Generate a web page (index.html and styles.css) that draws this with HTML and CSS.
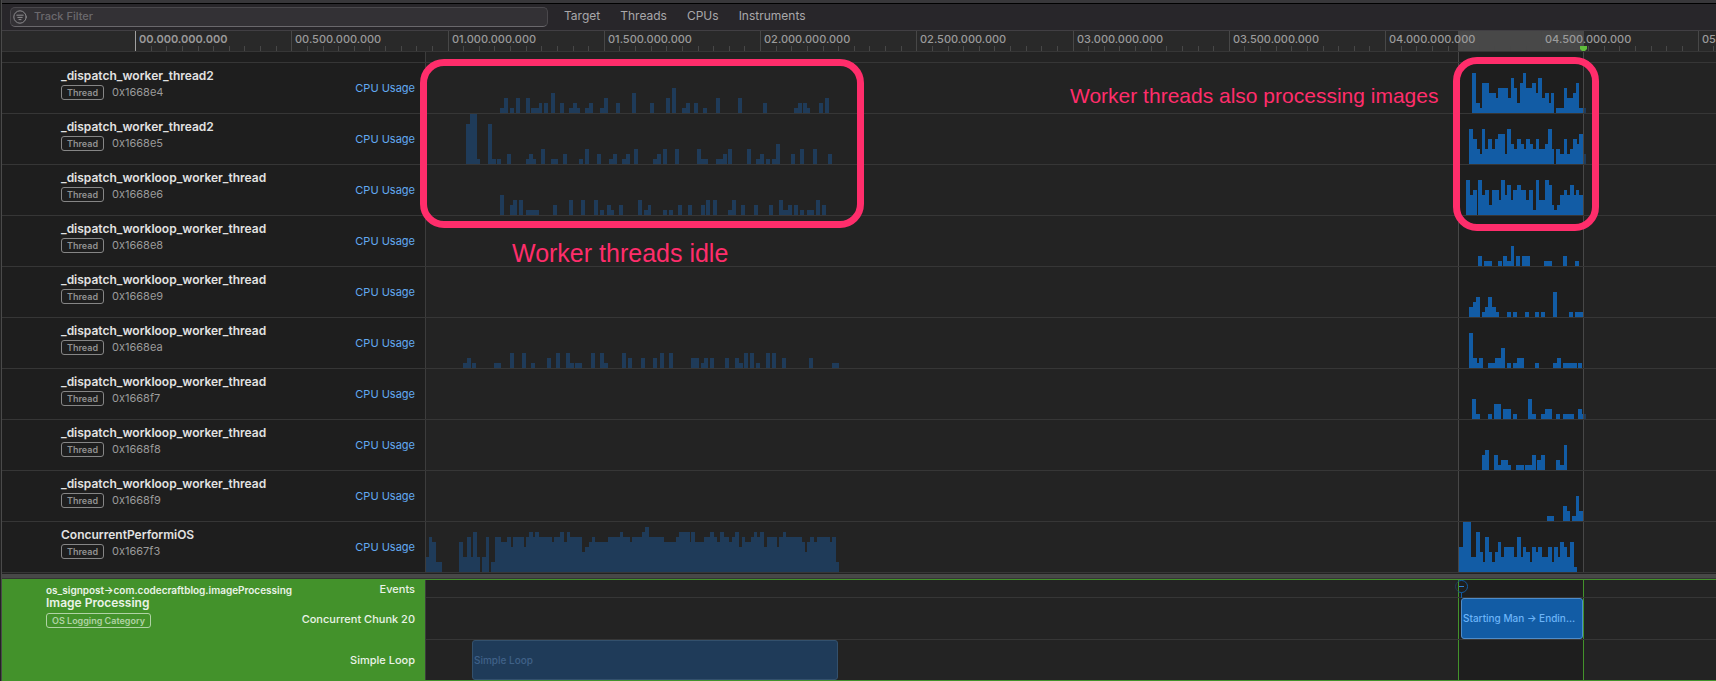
FILE: index.html
```html
<!DOCTYPE html>
<html lang="en">
<head>
<meta charset="utf-8">
<title>Instruments – Track Timeline</title>
<link rel="stylesheet" href="styles.css">
</head>
<body>
<div class="app">
  <div class="window-edge"></div>
  <header class="toolbar">
    <label class="filter">
      <svg class="filter-icon" viewBox="0 0 14 14" width="14" height="14" fill="none" stroke="currentColor" stroke-linecap="round" aria-hidden="true">
        <circle cx="7" cy="7" r="6.2"/>
        <path d="M3.800 5.200h6.400M4.800 7.400h4.400M6 9.600h2"/>
      </svg>
      <input class="filter-input" type="text" placeholder="Track Filter" aria-label="Track Filter">
    </label>
    <nav class="scopes">
      <button type="button">Target</button>
      <button type="button">Threads</button>
      <button type="button">CPUs</button>
      <button type="button">Instruments</button>
    </nav>
  </header>
  <div class="ruler">
    <div class="ruler-range"></div>
    <ol class="ruler-marks" id="ruler"></ol>
    <svg class="playhead" viewBox="0 0 7 5" width="7" height="5" aria-hidden="true"><path d="M0 0h7v3L5 5H2L0 3z" fill="#60bd3c"/></svg>
  </div>
  <main class="timeline">
    <div class="range"></div>
    <div class="spacer"><div class="track-head"></div></div>
    <div id="tracks"></div>
    <div class="note note-idle"></div>
    <p class="note-text note-text-idle">Worker threads idle</p>
    <div class="note note-busy"></div>
    <p class="note-text note-text-busy">Worker threads also processing images</p>
  </main>
  <div class="splitter"></div>
  <section class="signposts">
    <div class="range range-green"></div>
    <div class="signpost-head">
      <div class="signpost-info">
        <p class="signpost-source">os_signpost→com.codecraftblog.imageProcessing</p>
        <h2 class="signpost-title">Image Processing</h2>
        <span class="badge badge-light">OS Logging Category</span>
      </div>
      <ul class="signpost-labels">
        <li class="short">Events</li>
        <li>Concurrent Chunk 20</li>
        <li>Simple Loop</li>
      </ul>
    </div>
    <div class="signpost-lanes">
      <div class="sp-lane short">
        <svg class="event" viewBox="0 0 13 18" width="13" height="18" fill="none" aria-hidden="true">
          <path d="M3.500 1.300A6 6 0 0 0 3.500 11.700" stroke="#1f3b59"/>
          <path d="M3.500 1.300A6 6 0 1 1 3.500 11.700M6.500 12.500V18" stroke="#125ca5"/>
          <path d="M4 6.500h5" stroke="#2f80d0"/>
        </svg>
      </div>
      <div class="sp-lane"><div class="interval interval-chunk">Starting Man → Endin…</div></div>
      <div class="sp-lane"><div class="interval interval-loop">Simple Loop</div></div>
    </div>
  </section>
</div>
<script src="app.js"></script>
</body>
</html>
```
FILE: styles.css
```css
* { box-sizing: border-box; }
body {
  margin: 0;
  background: #232323;
  font: 11px/15px Inter, "Liberation Sans", sans-serif;
  color: #9b9b9b;
  overflow: hidden;
}
p, h2, h3, ol, ul { margin: 0; padding: 0; list-style: none; }
button, input { font: inherit; color: inherit; background: none; border: 0; padding: 0; }

.app {
  --head: 424px;
  --line: #363636;
  border-left: 1px solid #4a4a4a;
  margin-left: 1px;
  overflow: hidden;
}

.window-edge { height: 4px; background: #38373a; border-bottom: 1px solid #000; }

.toolbar {
  display: flex;
  align-items: center;
  height: 27px;
  padding: 0 8px 1px;
  background: #28262a;
  border-bottom: 1px solid #413f43;
}
.filter {
  display: flex;
  align-items: center;
  gap: 7px;
  width: 538px;
  height: 20px;
  padding-left: 2px;
  background: #333135;
  border: 1px solid #4a484c;
  border-bottom-color: #6a686c;
  border-radius: 5px;
}
.filter-icon { color: #8e8d90; }
.filter-input { flex: 1; outline: 0; font-size: 11px; font-weight: 500; }
.filter-input::placeholder { color: #6b696d; opacity: 1; }
.scopes { display: flex; gap: 20px; margin-left: 16px; padding-bottom: 2px; font-size: 12px; color: #a9a8aa; }

.ruler {
  position: relative;
  height: 21px;
  background: #292929;
  border-bottom: 1px solid var(--line);
}
.ruler-range {
  position: absolute;
  top: 0;
  bottom: 0;
  left: 1456px;
  width: 126px;
  background: #484848;
}
.ruler-marks { position: relative; display: flex; height: 20px; padding-left: 133px; }
.ruler-mark {
  flex: none;
  position: relative;
  border-left: 1px solid #474747;
  padding: 1px 0 0 3px;
  font-weight: 500;
  white-space: nowrap;
}
.ruler-mark:first-child { border-left-color: #a0a0a0; font-weight: 600; }
.ruler-ticks { position: absolute; left: -1px; bottom: 0; }
.playhead { position: absolute; left: 1578px; bottom: 0; }

.timeline, .signposts { position: relative; }
.range {
  position: absolute;
  top: 0;
  bottom: 0;
  left: 1456px;
  width: 126px;
  background: #1e1e1e;
  border: solid #474747;
  border-width: 0 1px;
}
.track-head {
  display: flex;
  align-items: center;
  justify-content: space-between;
  flex: none;
  width: var(--head);
  padding: 0 10px 0 59px;
  background: #1e1e1e;
  border-right: 1px solid #3c3c3c;
}
.spacer, .track {
  position: relative;
  display: flex;
  border-bottom: 1px solid var(--line);
}
.spacer { height: 11px; }
.track { height: 51px; }
.track-name { font-size: 12px; font-weight: 600; line-height: 15px; color: #e2e2e2; }
.track-id { display: flex; gap: 8px; margin: 2px 0 8px; }
.badge {
  display: inline-block;
  height: 15px;
  padding: 0 5px;
  border: 1px solid #868686;
  border-radius: 3px;
  font-size: 9px;
  font-weight: 600;
  line-height: 13px;
  color: #919191;
}
.metric { color: #62aaf2; }
.lane { flex: 1; min-width: 0; overflow: hidden; }
.chart { display: block; }
.bars-dim { fill: #1f3b59; }
.bars-live { fill: #125ca5; }

.note {
  position: absolute;
  border: 7px solid #ff2d6b;
  border-radius: 24px;
}
.note-idle { left: 418px; top: 7px; width: 444px; height: 169px; }
.note-busy { left: 1451px; top: 5px; width: 146px; height: 174px; }
.note-text {
  position: absolute;
  font-family: "Liberation Sans", Arial, sans-serif;
  color: #ff2d6b;
  white-space: nowrap;
}
.note-text-idle { left: 510px; top: 186px; font-size: 25px; line-height: 30px; }
.note-text-busy { left: 1068px; top: 31px; font-size: 21px; line-height: 26px; }

.splitter {
  height: 6px;
  background: #484848;
  border-top: 1px solid #222;
  border-bottom: 1px solid #343434;
}

.signposts {
  display: flex;
  border: solid #43922b;
  border-width: 1px 0;
}
.range-green { border-color: #43922b; }
.signpost-head {
  display: flex;
  justify-content: space-between;
  flex: none;
  width: var(--head);
  padding: 0 10px 0 44px;
  background: #43922b;
  border-right: 1px solid #3c3c3c;
  color: #eaf3e7;
}
.signpost-info { padding-top: 4px; }
.signpost-source { font-size: 10px; font-weight: 600; line-height: 12px; }
.signpost-title { font-size: 12px; font-weight: 600; line-height: 14px; margin-bottom: 3px; }
.badge-light { color: #b0d3a5; border-color: #b0d3a5; }
.signpost-labels { text-align: right; font-weight: 500; }
.signpost-labels li, .sp-lane { display: flex; align-items: center; justify-content: flex-end; height: 42px; }
.signpost-labels li:last-child, .sp-lane:last-child { height: 40px; }
.signpost-labels li.short, .sp-lane.short { height: 18px; }
.signpost-lanes { position: relative; flex: 1; min-width: 0; }
.sp-lane {
  justify-content: flex-start;
  align-items: stretch;
  border-bottom: 1px solid var(--line);
}
.sp-lane:last-child { border-bottom: 0; }
.event { margin-left: 1029px; }
.interval {
  display: flex;
  align-items: center;
  padding-left: 1px;
  border: 1px solid;
  border-radius: 3px;
  font-size: 10px;
  font-weight: 500;
  white-space: nowrap;
  overflow: hidden;
}
.interval-chunk { margin-left: 1035px; width: 122px; background: #125ca5; border-color: #4f8cc9; color: #6cb4f8; }
.interval-loop { margin-left: 46px; width: 366px; background: #1f3b59; border-color: #33506c; color: #3f6188; }
```
FILE: app.js
```js
// Each run is "start, then width/level pairs"; one level is 5px tall.
const tracks = [
  { name: "_dispatch_worker_thread2", id: "0x1668e4",
    dim: "80 4 1 4 3,90 4 1,96 4 3,106 4 3,111 8 1 3 2,124 4 2,131 4 4,140 4 2,149 4 1 4 2 3 1,165 4 1 4 2,180 4 1 4 3,196 4 2,212 4 4,230 4 2,246 4 3,252 4 5,262 4 1 4 2,274 4 2,283 4 1,296 4 3,318 4 3,343 4 2,374 4 1 4 2,383 4 2 3 1,399 4 2,405 4 3,1164 2 1",
    live: "1052 4 8 4 2 2 1 7 6 7 4 2 3 10 5 3 3 3 7 3 5 3 2 3 6 3 8 6 5 4 6 2 4 4 7 3 3 4 4 2 2 3 4 2 0 8 1 3 5 6 3 3 4 3 6 4 1" },
  { name: "_dispatch_worker_thread2", id: "0x1668e5",
    dim: "46 4 8 7 10 3 1,68 4 8 4 1,77 4 1,87 4 2,106 3 1 4 2 3 1,121 4 3,131 7 1,143 4 2,159 4 1,165 4 3,177 4 2,189 4 1 4 2,202 4 1 4 2,214 4 3,233 4 1 4 2,243 4 3,255 4 3,277 4 3 7 1,296 7 1 4 2,308 4 3,327 4 3,336 4 1 4 2,346 4 1,352 4 1 4 4,371 4 2,380 4 3,393 4 3,408 4 2,1164 2 2",
    live: "1049 4 7 4 5 3 3 2 2 3 7 3 3 4 5 3 3 3 5 7 6 2 2 4 7 3 4 3 3 4 5 3 4 2 3 4 5 3 4 3 3 3 5 6 3 3 4 4 7 2 3 2 0 4 3 4 2 3 5 3 2 3 3 4 5 2 4 4 6" },
  { name: "_dispatch_workloop_worker_thread", id: "0x1668e6",
    dim: "80 4 4,90 3 2 4 3,99 4 3,106 13 1,133 4 2,149 4 3,161 4 3,174 4 3,180 4 1,187 4 2 3 1,199 4 2,218 4 3,224 4 1 3 2,243 4 1,249 4 1,258 4 2,268 4 2,281 4 2,286 4 3,293 4 3,308 4 1 4 3,321 4 2,334 4 2,349 4 2,359 4 3 5 1 4 2,374 4 2,380 4 1,387 7 1,396 4 3,402 4 2",
    live: "1046 4 7 3 4 4 5 1 0 4 7 3 4 4 5 3 2 7 5 2 3 4 7 2 4 4 6 2 3 4 5 4 6 5 5 3 3 4 5 3 1 3 7 6 3 4 7 3 6 2 2 3 1 3 2 4 4 3 5 3 4 4 6 2 4 3 5 4 4" },
  { name: "_dispatch_workloop_worker_thread", id: "0x1668e8", dim: "",
    live: "1058 4 2,1064 8 1,1078 4 1,1083 4 2 4 1 3 4,1096 4 2,1102 8 2,1124 8 1,1143 4 2,1155 4 1" },
  { name: "_dispatch_workloop_worker_thread", id: "0x1668e9", dim: "",
    live: "1049 4 2 3 3 4 4,1062 3 1 3 2 4 4 4 2 3 1,1087 4 1,1093 4 1,1105 4 1,1115 4 1,1121 4 1,1133 4 5,1149 4 1,1155 8 1" },
  { name: "_dispatch_workloop_worker_thread", id: "0x1668ea",
    dim: "43 4 1 4 2,52 4 1,74 7 1,90 4 3,102 4 3,111 4 1,127 4 2,136 4 3,146 4 3 4 1,155 7 1,171 4 3,180 4 3 4 1,202 4 3,208 4 2,221 4 2,233 4 2,240 4 3,249 4 3,271 8 2,281 3 1 4 2,290 4 2,305 4 2,315 4 2 4 1,324 4 3,330 4 3,336 4 1,346 4 3,352 4 3,362 4 2,389 4 2,412 7 1",
    live: "1049 4 7 4 2 2 1 4 2,1068 7 1 6 2 4 4,1087 4 1,1093 4 1 7 2,1115 4 1,1133 4 1 4 2,1143 14 1,1158 4 1" },
  { name: "_dispatch_workloop_worker_thread", id: "0x1668f7", dim: "1164 2 1",
    live: "1052 4 4 4 1,1068 4 1,1074 7 3,1083 8 2,1093 4 1,1108 4 4 4 1,1121 4 1 7 2,1136 4 1,1143 11 1,1158 4 2 1 1" },
  { name: "_dispatch_workloop_worker_thread", id: "0x1668f8", dim: "",
    live: "1062 3 3 4 4,1074 4 3 3 1 7 2 3 1,1096 8 1,1105 7 1 4 3,1117 4 2 4 3,1136 4 2 4 1 3 5" },
  { name: "_dispatch_workloop_worker_thread", id: "0x1668f9", dim: "",
    live: "1127 7 1,1143 4 3 3 2,1152 4 1 3 5 4 2" },
  { name: "ConcurrentPerformiOS", id: "0x1667f3",
    dim: "6 3 3 3 7 4 6 6 2,39 4 6 4 3 4 7 2 3 4 8 3 3,62 4 3 3 7,71 4 2 6 7 6 6 4 7 2 5 11 7 2 5 3 7 4 8 2 7 4 8 13 7 2 6 6 7 4 8 3 6 3 8 12 7 3 4 4 5 3 6 3 7 13 6 12 7 3 8 7 7 2 6 10 7 3 8 4 9 15 7 12 6 3 7 11 8 1 6 4 8 9 6 6 7 4 8 3 7 3 6 4 8 5 7 3 6 3 7 4 8 3 5 3 7 6 6 3 7 3 8 3 7 4 8 3 5 10 7 2 5 4 7 3 8 16 7 3 6 2 4 3 6 4 7 3 6 13 7 2 6 4 7 3 2",
    live: "1039 4 5 8 10 5 3 4 8 3 4 2 2 4 7 3 4 3 2 3 4 3 6 3 3 10 5 3 3 4 7 2 3 3 5 4 4 2 2 4 5 2 4 4 5 6 3 4 5 2 2 4 5 2 3 4 6 3 5 3 3 4 6 3 1" }
];

const LEVEL = 5;
const HEIGHT = 50;

function barsPath(runs) {
  if (!runs) return "";
  return runs.split(",").map(run => {
    const [start, ...pairs] = run.split(" ").map(Number);
    let x = start;
    let d = `M${x} ${HEIGHT}`;
    for (let i = 0; i < pairs.length; i += 2) {
      d += `V${HEIGHT - pairs[i + 1] * LEVEL}`;
      x += pairs[i];
      d += `H${x}`;
    }
    return d + `V${HEIGHT}Z`;
  }).join("");
}

document.getElementById("tracks").innerHTML = tracks.map(t => `
  <section class="track">
    <div class="track-head">
      <div>
        <h3 class="track-name">${t.name}</h3>
        <div class="track-id"><span class="badge">Thread</span><span>${t.id}</span></div>
      </div>
      <span class="metric">CPU Usage</span>
    </div>
    <div class="lane">
      <svg class="chart" width="1290" height="50" viewBox="6 0 1290 50" shape-rendering="crispEdges" aria-hidden="true">
        <path class="bars-dim" d="${barsPath(t.dim)}"/>
        <path class="bars-live" d="${barsPath(t.live)}"/>
      </svg>
    </div>
  </section>`).join("");

// Half-second marks with ten subdivisions each.
const STEP = 156.25;
const marks = [];
for (let i = 0; i <= 10; i++) {
  const from = Math.round(i * STEP);
  const width = Math.round((i + 1) * STEP) - from;
  const label = `${String(Math.floor(i / 2)).padStart(2, "0")}.${i % 2 ? "500" : "000"}.000.000`;
  let d = "";
  for (let k = 1; k < 10; k++) {
    d += `M${Math.round((i + k / 10) * STEP) - from + 0.5} 0v5`;
  }
  marks.push(`<li class="ruler-mark" style="width:${width}px">${label}<svg class="ruler-ticks" width="157" height="5" stroke="#474747" aria-hidden="true"><path d="${d}"/></svg></li>`);
}
document.getElementById("ruler").innerHTML = marks.join("");
```
